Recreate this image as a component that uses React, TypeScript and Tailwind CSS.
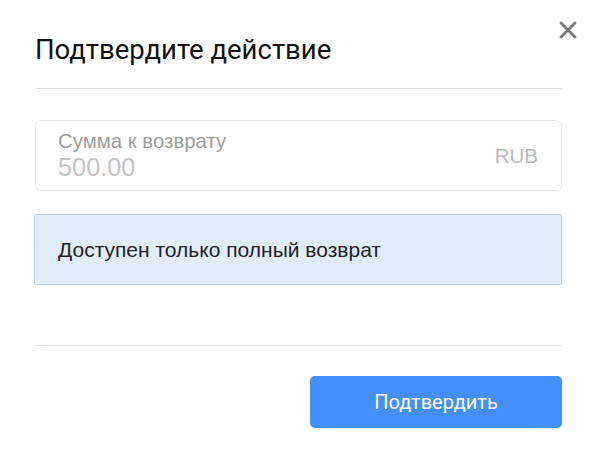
import { X } from 'lucide-react'

export default function App() {
  return (
    <main className="w-[598px] h-[460px] bg-white relative font-['Liberation_Sans',Arial,sans-serif]">
      <button className="absolute top-[16px] right-[16px] text-[#767676]" aria-label="Закрыть">
        <X size={28} strokeWidth={2.4} />
      </button>

      <div className="pl-[35px] pr-[36px] pt-[32px]">
        <h2 className="font-['Roboto',sans-serif] text-[27.5px] leading-[36px] text-[#111]">Подтвердите действие</h2>
        <div className="mt-[20px] border-t border-[#dfdfe6]" />

        <div className="mt-[31px] h-[71px] border border-[#e6e6e6] rounded-[6px] pl-[22px] pr-[23px] flex items-center">
          <div className="flex-1 flex flex-col">
            <span className="text-[20.4px] leading-[22px] text-[#9c9c9c]">Сумма к возврату</span>
            <span className="text-[25.3px] leading-[30px] text-[#c3c3c3]">500.00</span>
          </div>
          <span className="text-[20.5px] text-[#b9b9b9] pt-[2px]">RUB</span>
        </div>

        <div className="mt-[23px] -ml-px h-[71px] bg-[#e1edfd] border border-[#bcd3f4] rounded-[2px] pl-[23px] flex items-center">
          <span className="text-[21px] text-[#222]">Доступен только полный возврат</span>
        </div>

        <div className="mt-[60px] border-t border-[#dfe3ec]" />

        <div className="mt-[30px] flex justify-end">
          <button className="w-[252px] h-[52px] rounded-[5px] bg-[#448ffe] text-white text-[20px] font-['Roboto',sans-serif]">
            Подтвердить
          </button>
        </div>
      </div>
    </main>
  )
}
